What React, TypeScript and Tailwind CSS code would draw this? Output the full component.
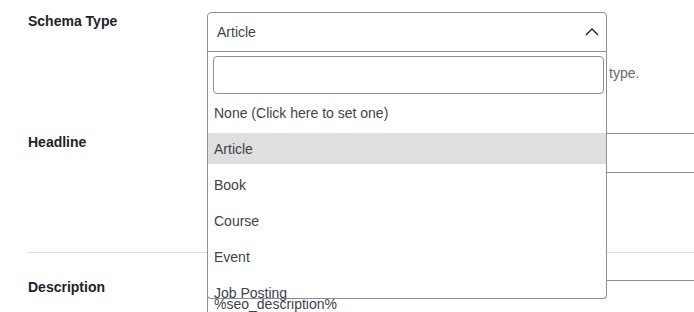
const options = [
  "None (Click here to set one)",
  "Article",
  "Book",
  "Course",
  "Event",
  "Job Posting",
];

function ChevronUp() {
  return (
    <svg width="14" height="8" viewBox="0 0 14 8" fill="none" className="text-[#1e1e1e]">
      <polyline points="1,7 7,1 13,7" stroke="currentColor" strokeWidth="1.3" />
    </svg>
  );
}

export default function App() {
  return (
    <div className="h-[312px] w-[694px] overflow-hidden bg-white font-['Liberation_Sans',Arial,sans-serif] text-[14px] leading-5 text-[#3c434a]">
      <div className="pl-[28px] pt-[11px]">
        {/* Schema type */}
        <div className="flex">
          <label className="w-[179px] shrink-0 font-bold text-[#1d2327]">Schema Type</label>
          <div className="min-w-0 flex-1">
            <div className="relative mt-[1px] w-[400px]">
              <div className="flex h-[40px] items-center justify-between rounded-t-[4px] border border-[#8c8f94] pl-[9px] pr-[7px]">
                <span>Article</span>
                <ChevronUp />
              </div>

              {/* Open listbox */}
              <div className="absolute left-0 top-full z-10 h-[247px] w-[400px] rounded-b-[4px] border-x border-b border-[#8c8f94] bg-white">
                <div className="pl-[5px] pr-[2px] pt-[4px]">
                  <input className="block h-[38px] w-full rounded-[4px] border border-[#8c8f94] bg-white px-2 outline-none" />
                </div>
                <ul className="pt-[3px]">
                  {options.map((opt) => (
                    <li
                      key={opt}
                      className={
                        opt === "Article"
                          ? "mb-[5px] flex h-[31px] items-center bg-[#dfdfdf] pl-[6px]"
                          : "mb-[5px] flex h-[31px] items-center pl-[6px]"
                      }
                    >
                      {opt}
                    </li>
                  ))}
                </ul>
              </div>
            </div>
            <p className="mt-[11px] whitespace-nowrap text-[#646970]">
              <span className="inline-block w-[402px] overflow-hidden align-top">
                Leave it on None to use the default schema
              </span>
              type.
            </p>
          </div>
        </div>

        {/* Headline */}
        <div className="mt-[49px] flex">
          <label className="w-[179px] shrink-0 font-bold text-[#1d2327]">Headline</label>
          <div className="min-w-0 flex-1">
            <div className="mt-[1px] h-[40px] w-[600px] border border-[#8c8f94] bg-white" />
          </div>
        </div>

        <div className="mt-[79px] border-t border-[#dcdcde]" />

        {/* Description */}
        <div className="mt-[24px] flex">
          <label className="w-[179px] shrink-0 font-bold text-[#1d2327]">Description</label>
          <div className="min-w-0 flex-1">
            <div className="mt-[3px] h-[80px] w-[600px] border-l border-t border-[#8c8f94] pl-[6px] pt-[13px]">
              %seo_description%
            </div>
          </div>
        </div>
      </div>
    </div>
  );
}
